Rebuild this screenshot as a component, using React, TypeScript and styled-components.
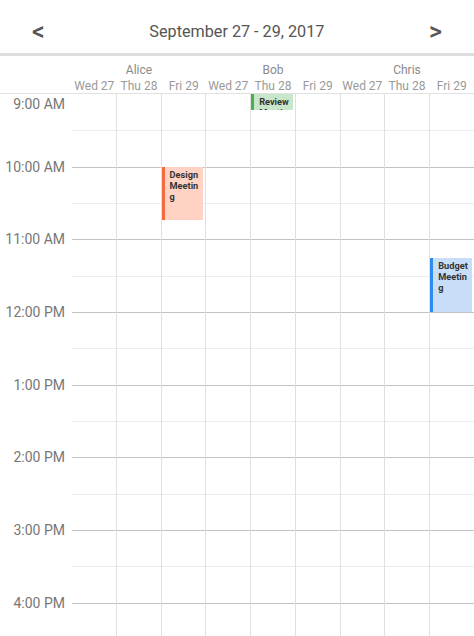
import React from "react";
import styled, { createGlobalStyle } from "styled-components";

const HOUR = 72.67;

const Global = createGlobalStyle`
  html, body { margin: 0; padding: 0; background: #fff; }
  body { font-family: Roboto, "Liberation Sans", Arial, sans-serif; overflow: hidden; }
  * { box-sizing: border-box; }
`;

const Page = styled.div`
  width: 474px;
  height: 636px;
  overflow: hidden;
  display: flex;
  flex-direction: column;
`;

const Toolbar = styled.div`
  height: 56px;
  flex: none;
  display: flex;
  align-items: center;
  justify-content: space-between;
  padding: 9px 32px 0 32px;
  border-bottom: 3px solid #dedede;
`;

const NavButton = styled.button`
  border: none;
  background: none;
  padding: 0;
  font-family: Roboto, "Liberation Sans", sans-serif;
  font-size: 25px;
  font-weight: 500;
  color: #555;
  cursor: pointer;
  line-height: 1;
`;

const Title = styled.div`
  font-size: 16.2px;
  color: #555;
`;

const HeaderRow = styled.div`
  display: flex;
  flex: none;
  padding-left: 72px;
  height: 37px;
  padding-top: 7px;
`;

const ResourceGroup = styled.div`
  flex: 3;
  display: flex;
  flex-direction: column;
  align-items: center;
`;

const ResourceName = styled.div`
  font-size: 12px;
  color: #8a8a8a;
  line-height: 14px;
  height: 16px;
`;

const DayRow = styled.div`
  display: flex;
  width: 100%;
`;

const DayLabel = styled.div`
  flex: 1;
  text-align: center;
  font-size: 12px;
  color: #9a9a9a;
  line-height: 14px;
  white-space: nowrap;
`;

const Body = styled.div`
  flex: 1;
  display: flex;
  overflow: hidden;
  border-top: 1px solid #e2e2e2;
`;

const Gutter = styled.div`
  width: 72px;
  flex: none;
`;

const TimeLabel = styled.div<{ $first?: boolean }>`
  height: ${HOUR}px;
  padding-right: 7px;
  text-align: right;
  font-size: 14px;
  color: #777;
  line-height: 18px;
  & > span {
    display: block;
    transform: translateY(${(p) => (p.$first ? "1px" : "-9px")});
  }
`;

const Columns = styled.div`
  flex: 1;
  display: flex;
`;

const DayColumn = styled.div<{ $last?: boolean }>`
  flex: 1;
  position: relative;
  border-right: ${(p) => (p.$last ? "none" : "1px solid #e0e0e0")};
`;

const Slot = styled.div<{ $hour: boolean }>`
  height: ${HOUR / 2}px;
  border-top: 1px solid ${(p) => (p.$hour ? "#c4c4c4" : "#ececec")};
  &:first-child {
    border-top-color: transparent;
  }
`;

const Event = styled.div<{ $bar: string; $bg: string }>`
  position: absolute;
  left: 0;
  right: 2px;
  background: ${(p) => p.$bg};
  border-left: 3px solid ${(p) => p.$bar};
  padding: 2px 3px 0 5px;
  overflow: hidden;
  font-size: 9.2px;
  font-weight: 700;
  line-height: 11px;
  color: #333;
  word-break: break-all;
  z-index: 1;
`;

const resources = ["Alice", "Bob", "Chris"];
const days = ["Wed 27", "Thu 28", "Fri 29"];
const hours = ["9:00 AM", "10:00 AM", "11:00 AM", "12:00 PM", "1:00 PM", "2:00 PM", "3:00 PM", "4:00 PM"];

type Ev = { col: number; start: number; end: number; title: string; bar: string; bg: string };
const events: Ev[] = [
  { col: 4, start: 9, end: 9.22, title: "Review Meeting", bar: "#4caf50", bg: "#c8e6c9" },
  { col: 2, start: 10, end: 10.73, title: "Design Meeting", bar: "#f26a3d", bg: "#ffd2c3" },
  { col: 8, start: 11.25, end: 12, title: "Budget Meeting", bar: "#2d8cec", bg: "#c8ddf7" },
];

export default function App() {
  const cols = Array.from({ length: 9 }, (_, i) => i);
  const slots = Array.from({ length: 16 }, (_, i) => i);
  return (
    <Page>
      <Global />
      <Toolbar>
        <NavButton>&lt;</NavButton>
        <Title>September 27 - 29, 2017</Title>
        <NavButton>&gt;</NavButton>
      </Toolbar>
      <HeaderRow>
        {resources.map((r) => (
          <ResourceGroup key={r}>
            <ResourceName>{r}</ResourceName>
            <DayRow>
              {days.map((d) => (
                <DayLabel key={d}>{d}</DayLabel>
              ))}
            </DayRow>
          </ResourceGroup>
        ))}
      </HeaderRow>
      <Body>
        <Gutter>
          {hours.map((h, i) => (
            <TimeLabel key={h} $first={i === 0}>
              <span>{h}</span>
            </TimeLabel>
          ))}
        </Gutter>
        <Columns>
          {cols.map((c) => (
            <DayColumn key={c} $last={c === 8}>
              {slots.map((s) => (
                <Slot key={s} $hour={s % 2 === 0} />
              ))}
              {events
                .filter((e) => e.col === c)
                .map((e) => (
                  <Event
                    key={e.title}
                    $bar={e.bar}
                    $bg={e.bg}
                    style={{ top: (e.start - 9) * HOUR, height: (e.end - e.start) * HOUR }}
                  >
                    {e.title}
                  </Event>
                ))}
            </DayColumn>
          ))}
        </Columns>
      </Body>
    </Page>
  );
}
